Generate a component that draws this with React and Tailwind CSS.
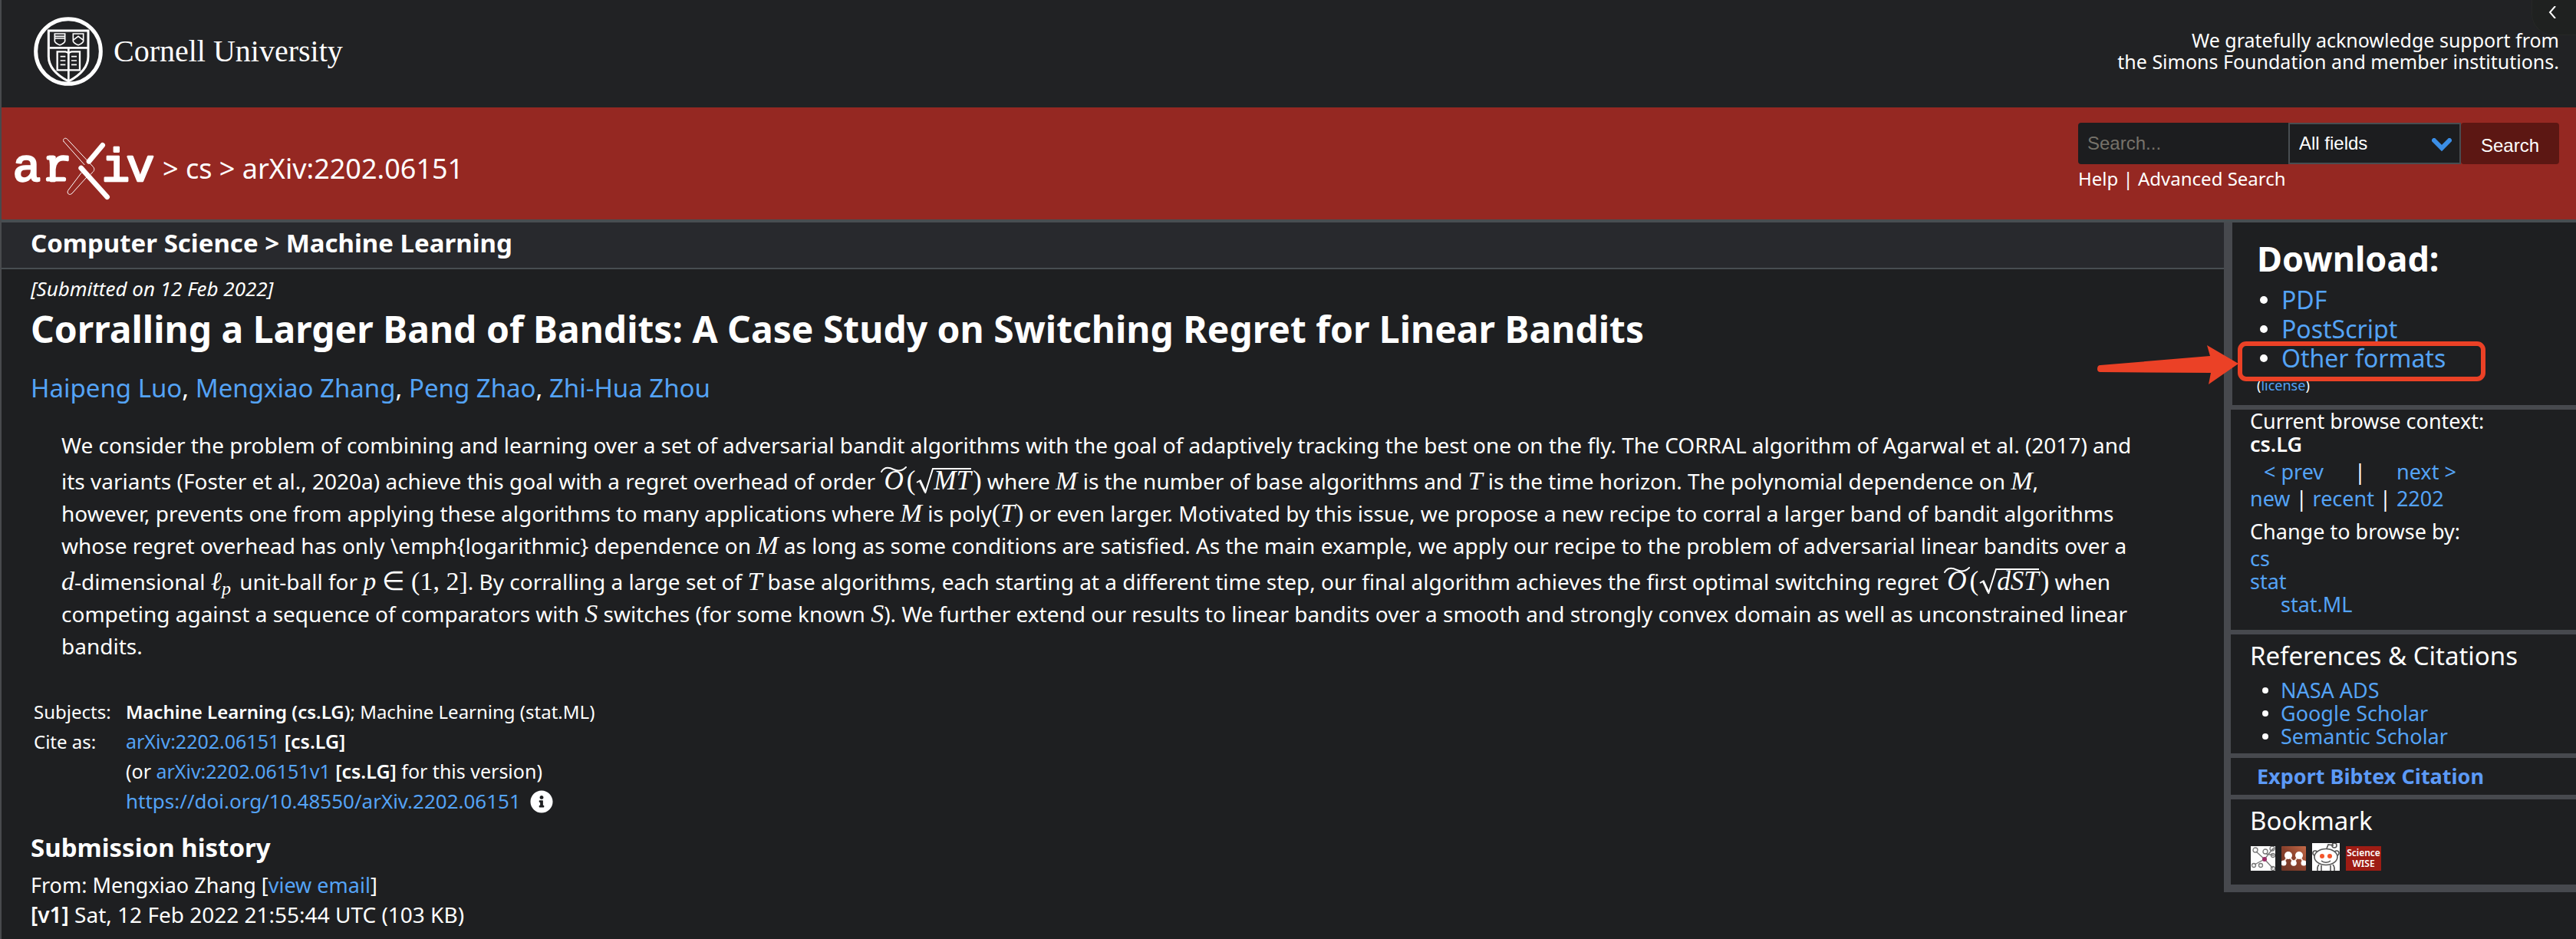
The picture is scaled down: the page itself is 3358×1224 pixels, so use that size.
import React from 'react';
import { FaInfoCircle } from 'react-icons/fa';

function A({ children, className = '' }) {
  return (
    <a href="#" className={'text-[#54a3f6] hover:underline ' + className}>
      {children}
    </a>
  );
}

function Seal() {
  return (
    <svg viewBox="41 35 270 270" className="h-[90px] w-[90px] shrink-0" fill="none" stroke="#fff" aria-hidden="true">
      <circle cx="176" cy="170" r="127" strokeWidth="15" />
      <path d="M99 89H254V190C254 235 220 264 177 287C133 264 99 235 99 190Z" strokeWidth="9" />
      <path d="M103 156H251M177 156V284" strokeWidth="8" />
      <path d="M123 101H163V130C161 136 151 142 143 145C135 142 125 136 123 130ZM123 111H163M123 119H163" strokeWidth="5" />
      <path d="M195 101H235V130C233 136 223 142 215 145C207 142 197 136 195 130ZM195 126L215 111L235 126" strokeWidth="5" />
      <path d="M133 171H165Q177 174 177 180Q177 174 189 171H221V243H133Z" strokeWidth="7" />
      <path d="M145 190H165M145 206H165M145 222H165M188 190H209M188 206H209M188 222H209" strokeWidth="5" />
    </svg>
  );
}

function ArxivLogo() {
  return (
    <svg viewBox="0 0 600 300" className="h-[100px] w-[200px] shrink-0" role="img" aria-label="arXiv">
      <g fill="#fff" stroke="#fff" strokeWidth="7" strokeLinejoin="round" fontFamily="'Liberation Mono', monospace" fontSize="184" textAnchor="middle">
        <text x="75" y="197">a</text>
        <text x="197" y="197">r</text>
        <text x="423" y="197">i</text>
        <text x="519" y="197">v</text>
      </g>
      <path d="M158 191H220M160 107H180" stroke="#fff" strokeWidth="17" strokeLinecap="round" fill="none" />
      <g fill="none" stroke="#fff" strokeLinecap="round" strokeLinejoin="round">
        <path d="M371 58L318 121" strokeWidth="20" />
        <path d="M287 147L389 260" strokeWidth="20" />
        <path d="M219 43C213 34 225 26 233 34L334 142C340 149 340 156 333 163L325 171M219 43L300 134" strokeWidth="3" />
        <path d="M288 166L236 235C230 247 242 256 252 246L308 184" strokeWidth="3" />
      </g>
    </svg>
  );
}

function M({ children }) {
  return <i className="font-['Liberation_Serif',serif] text-[34px] leading-none">{children}</i>;
}

function R({ children }) {
  return <span className="font-['Liberation_Serif',serif] text-[34px] leading-none">{children}</span>;
}

function TildeO({ children }) {
  return (
    <span className="ml-1 inline-block font-['Liberation_Serif',serif] text-[35px] leading-[30px]">
      <span className="relative mr-1 inline-block">
        <svg viewBox="0 0 34 8" className="absolute -top-1 left-1/2 h-2 w-[34px] -translate-x-1/2" aria-hidden="true">
          <path d="M1 7C5 0 11 1 17 4S28 6 33 1" fill="none" stroke="#fff" strokeWidth="2" strokeLinecap="round" />
        </svg>
        <i>O</i>
      </span>
      (
      <span className="relative inline-block pr-0.5 pl-6">
        <svg viewBox="0 0 24 34" className="absolute top-0 left-0 h-[34px] w-6" fill="none" stroke="#fff" aria-hidden="true">
          <path d="M2 19L7 16" strokeWidth="2" />
          <path d="M6 16L13 31" strokeWidth="3" />
          <path d="M13 33L23 1H24" strokeWidth="2" />
        </svg>
        <i className="inline-block border-t-2 border-white">{children}</i>
      </span>
      )
    </span>
  );
}

function BookmarkIcons() {
  return (
    <div className="mt-[7px] flex items-end gap-2 pl-[26px]">
      <a href="#" aria-label="CiteULike">
        <svg viewBox="0 0 32 32" className="block size-8">
          <rect width="32" height="32" fill="#fdfdfd" />
          <g fill="none" stroke="#777" strokeWidth="1.3">
            <path d="M18 17L7 7M18 17L29 29M18 17L25 8L31 2M18 17L5 24M20 10L30 12M25 8L29 3" />
            <circle cx="6" cy="5" r="3" />
            <circle cx="19" cy="7" r="3" />
            <circle cx="28" cy="3" r="3" />
            <circle cx="29" cy="12" r="2.5" />
            <circle cx="4" cy="25" r="2.5" />
            <circle cx="13" cy="25" r="2.5" />
            <circle cx="29" cy="29" r="2.5" />
          </g>
          <circle cx="18" cy="17" r="3" fill="#9a2c66" />
        </svg>
      </a>
      <a href="#" aria-label="BibSonomy">
        <svg viewBox="0 0 32 32" className="block size-8">
          <defs>
            <linearGradient id="copper" x1="0" y1="1" x2="1" y2="0">
              <stop offset="0" stopColor="#6b3526" />
              <stop offset=".5" stopColor="#8a412c" />
              <stop offset="1" stopColor="#c46a48" />
            </linearGradient>
          </defs>
          <rect width="32" height="32" fill="url(#copper)" rx="1" />
          <path d="M3 21L9 12L16 21L23 12L29 21" stroke="#f2dcd2" strokeWidth="2" fill="none" />
          <g fill="#fff">
            <circle cx="9" cy="12" r="5" />
            <circle cx="23" cy="12" r="5" />
            <circle cx="3" cy="22" r="3.5" />
            <circle cx="16" cy="22" r="3.8" />
            <circle cx="29" cy="22" r="3.5" />
          </g>
        </svg>
      </a>
      <a href="#" aria-label="Reddit">
        <svg viewBox="0 0 36 36" className="block size-9">
          <rect width="36" height="36" fill="#fff" />
          <g fill="none" stroke="#555" strokeWidth="1.6">
            <circle cx="4" cy="13" r="3" />
            <circle cx="32" cy="13" r="3" />
            <path d="M18 10L21 2L28 3" />
            <circle cx="29" cy="3" r="3" />
            <path d="M9 28C6 31 7 34 7 36M27 28C30 31 29 34 29 36M12 29V36M24 29V36" />
            <ellipse cx="18" cy="18" rx="15" ry="10.5" fill="#fff" />
            <path d="M12 23C15 26 21 26 24 23" />
          </g>
          <circle cx="13" cy="17" r="3" fill="#f4562c" />
          <circle cx="23" cy="17" r="3" fill="#f4562c" />
        </svg>
      </a>
      <a
        href="#"
        className="flex h-8 w-[46px] flex-col items-center justify-center bg-[#9e1c14] text-center text-[12px] leading-[14px] font-semibold text-white"
      >
        <span>Science</span>
        <span>WISE</span>
      </a>
    </div>
  );
}

function Sidebar() {
  return (
    <aside className="w-[459px] shrink-0 self-start border-b-[10px] border-l-[9px] border-[#47494e] text-[27px] leading-[30px]">
      <section className="border-b-[6px] border-l-2 border-[#47494e] pt-5 pb-3.5 pl-8">
        <h2 className="text-[45px] leading-[54px] font-bold">Download:</h2>
        <div className="relative mt-2">
          <ul className="text-[32px] leading-[38px]">
            {['PDF', 'PostScript', 'Other formats'].map((t) => (
              <li key={t} className="flex items-center gap-[18px] pl-1 before:size-2.5 before:rounded-full before:bg-white before:content-['']">
                <A>{t}</A>
              </li>
            ))}
          </ul>
          <svg viewBox="0 0 515 62" className="pointer-events-none absolute top-[68px] left-[-212px] h-[62px] w-[515px]" aria-hidden="true">
            <rect x="190" y="8" width="317" height="46" rx="8" fill="none" stroke="#eb4126" strokeWidth="6" />
            <path d="M8 36L151 24L147 10L188 34L149 61L152 46L8 45Q4 45 4 41Q4 36 8 36Z" fill="#eb4126" />
          </svg>
        </div>
        <p className="mt-1 text-[18px] leading-6">
          (<A>license</A>)
        </p>
      </section>

      <section className="border-b-[6px] border-[#47494e] pb-[18px] pl-[25px]">
        <p>Current browse context:</p>
        <p className="font-semibold">cs.LG</p>
        <p className="mt-[3px] flex pl-[18px] leading-[35px]">
          <A>&lt; prev</A>
          <span className="px-10">|</span>
          <A>next &gt;</A>
        </p>
        <p className="leading-[35px]">
          <A>new</A> | <A>recent</A> | <A>2202</A>
        </p>
        <p className="mt-[11px]">Change to browse by:</p>
        <ul className="mt-[5px]">
          <li><A>cs</A></li>
          <li><A>stat</A></li>
          <li className="pl-10"><A>stat.ML</A></li>
        </ul>
      </section>

      <section className="border-b-[6px] border-[#47494e] pt-1.5 pb-[7px] pl-[25px]">
        <h3 className="text-[33px] leading-[44px]">References &amp; Citations</h3>
        <ul className="mt-2">
          {['NASA ADS', 'Google Scholar', 'Semantic Scholar'].map((t) => (
            <li key={t} className="flex items-center gap-4 pl-4 before:size-2 before:rounded-full before:bg-white before:content-['']">
              <A>{t}</A>
            </li>
          ))}
        </ul>
      </section>

      <section className="border-b-[6px] border-[#47494e] pl-[34px]">
        <button type="button" className="block text-[27px] leading-[48px] font-bold text-[#5c9af7]">
          Export Bibtex Citation
        </button>
      </section>

      <section className="pt-1.5 pb-[18px]">
        <h3 className="pl-[25px] text-[33px] leading-[44px]">Bookmark</h3>
        <BookmarkIcons />
      </section>
    </aside>
  );
}

export default function App() {
  return (
    <div className="relative min-h-screen overflow-hidden border-l-2 border-[#484a4d] bg-[#1e1f21] font-['Noto_Sans',sans-serif] text-white">
      <header>
        <div className="flex h-[140px] items-start justify-between bg-[#212224] pr-[22px] pl-[42px]">
          <a href="#" className="mt-[22px] flex items-center gap-3.5">
            <Seal />
            <span className="font-['Liberation_Serif',serif] text-[40px] leading-10">Cornell University</span>
          </a>
          <p className="mt-[38px] text-right text-[25px] leading-7">
            We gratefully acknowledge support from
            <br />
            the Simons Foundation and member institutions.
          </p>
        </div>
        <button
          type="button"
          aria-label="Expand"
          className="absolute top-0 right-0 flex h-[46px] w-[58px] items-start justify-center rounded-bl-[28px] border-b border-l border-[#262826] bg-[#1f2120] pt-2 pr-1.5"
        >
          <svg viewBox="0 0 10 16" className="h-4 w-2.5" fill="none" stroke="#fff" strokeWidth="2">
            <path d="M9 0L2 8L9 16" />
          </svg>
        </button>

        <div className="flex h-[150px] items-start justify-between border-b-4 border-[#484d51] bg-[#952822] pr-[22px] pl-2">
          <div className="flex items-center gap-0.5 pt-[30px] text-[36px] leading-[44px]">
            <a href="#"><ArxivLogo /></a>
            <span>
              &gt; <a href="#">cs</a> &gt; arXiv:2202.06151
            </span>
          </div>
          <form className="mt-5 w-[627px]" onSubmit={(e) => e.preventDefault()}>
            <div className="flex h-[54px] font-['Liberation_Sans',sans-serif] text-[24px]">
              <input
                type="text"
                aria-label="Search term or terms"
                placeholder="Search..."
                className="min-w-0 flex-1 rounded-l bg-[#1c1d1f] px-3 text-white placeholder-[#76726a] outline-none"
              />
              <div className="relative w-[225px]">
                <select
                  aria-label="Field to search"
                  className="h-full w-full appearance-none border-2 border-[#484d51] bg-[#1c1d1f] pl-3 text-white outline-none"
                >
                  <option>All fields</option>
                </select>
                <svg viewBox="0 0 26 18" className="pointer-events-none absolute top-5 right-3 h-[18px] w-[26px]" fill="none" stroke="#3b8ee6" strokeWidth="6">
                  <path d="M3 3L13 13L23 3" strokeLinecap="round" />
                </svg>
              </div>
              <button type="submit" className="w-32 rounded bg-[#5c1713] pt-1.5 text-white">
                Search
              </button>
            </div>
            <p className="mt-1 text-[24px] leading-[30px]">
              <a href="#">Help</a> | <a href="#">Advanced Search</a>
            </p>
          </form>
        </div>
      </header>

      <div className="flex">
        <main className="min-w-0 flex-1">
          <div className="border-b-2 border-[#484d51] bg-[#28292d] pb-1.5 pl-[38px] text-[33px] leading-[53px] font-bold">
            Computer Science &gt; Machine Learning
          </div>
          <article className="px-[38px] pb-3">
            <p className="mt-[7px] text-[26px] leading-9 italic">[Submitted on 12 Feb 2022]</p>
            <h1 className="mt-[5px] text-[48px] leading-[60px] font-bold">
              Corralling a Larger Band of Bandits: A Case Study on Switching Regret for Linear Bandits
            </h1>
            <p className="mt-[25px] text-[33px] leading-[44px]">
              <A>Haipeng Luo</A>, <A>Mengxiao Zhang</A>, <A>Peng Zhao</A>, <A>Zhi-Hua Zhou</A>
            </p>

            <blockquote className="mt-[31px] ml-10 text-[28px] leading-[42px] whitespace-nowrap">
              <span className="block">
                We consider the problem of combining and learning over a set of adversarial bandit algorithms with the goal of adaptively tracking the best one on the fly. The CORRAL algorithm of Agarwal et al. (2017) and
              </span>
              <span className="block pt-[5px]">
                its variants (Foster et al., 2020a) achieve this goal with a regret overhead of order <TildeO>MT</TildeO> where <M>M</M> is the number of base algorithms and <M>T</M> is the time horizon. The polynomial dependence on <M>M</M>,
              </span>
              <span className="block">
                however, prevents one from applying these algorithms to many applications where <M>M</M> is poly<R>(</R><M>T</M><R>)</R> or even larger. Motivated by this issue, we propose a new recipe to corral a larger band of bandit algorithms
              </span>
              <span className="block">
                whose regret overhead has only \emph&#123;logarithmic&#125; dependence on <M>M</M> as long as some conditions are satisfied. As the main example, we apply our recipe to the problem of adversarial linear bandits over a
              </span>
              <span className="block pt-[5px]">
                <M>d</M>-dimensional <M>ℓ</M>
                <sub className="mr-1 font-['Liberation_Serif',serif] text-[24px] leading-none italic">p</sub> unit-ball for <M>p</M> <R>∈ (1, 2]</R>. By corralling a large set of <M>T</M> base algorithms, each starting at a different time step, our final algorithm achieves the first optimal switching regret <TildeO>dST</TildeO> when
              </span>
              <span className="block">
                competing against a sequence of comparators with <M>S</M> switches (for some known <M>S</M>). We further extend our results to linear bandits over a smooth and strongly convex domain as well as unconstrained linear
              </span>
              <span className="block">bandits.</span>
            </blockquote>

            <table className="mt-[45px] ml-1 text-[24px] leading-[39px]">
              <tbody>
                <tr>
                  <th scope="row" className="w-[120px] text-left font-normal">Subjects:</th>
                  <td>
                    <span className="font-semibold">Machine Learning (cs.LG)</span>; Machine Learning (stat.ML)
                  </td>
                </tr>
                <tr>
                  <th scope="row" className="text-left font-normal">Cite as:</th>
                  <td className="text-[25px]">
                    <A>arXiv:2202.06151</A> <span className="font-semibold">[cs.LG]</span>
                  </td>
                </tr>
                <tr>
                  <td />
                  <td className="text-[25px]">
                    (or <A>arXiv:2202.06151v1</A> <span className="font-semibold">[cs.LG]</span> for this version)
                  </td>
                </tr>
                <tr>
                  <td />
                  <td className="text-[26px]">
                    <span className="flex items-center gap-3">
                      <A>https://doi.org/10.48550/arXiv.2202.06151</A>
                      <button type="button" aria-label="Focus to learn more">
                        <FaInfoCircle className="size-[30px]" />
                      </button>
                    </span>
                  </td>
                </tr>
              </tbody>
            </table>

            <h2 className="mt-[19px] text-[33px] leading-[44px] font-bold">Submission history</h2>
            <div className="mt-[7px] leading-[39px]">
              <p className="text-[27px]">
                From: Mengxiao Zhang [<A>view email</A>]
              </p>
              <p className="text-[28px]">
                <span className="font-semibold">[v1]</span> Sat, 12 Feb 2022 21:55:44 UTC (103 KB)
              </p>
            </div>
          </article>
        </main>
        <Sidebar />
      </div>
    </div>
  );
}
